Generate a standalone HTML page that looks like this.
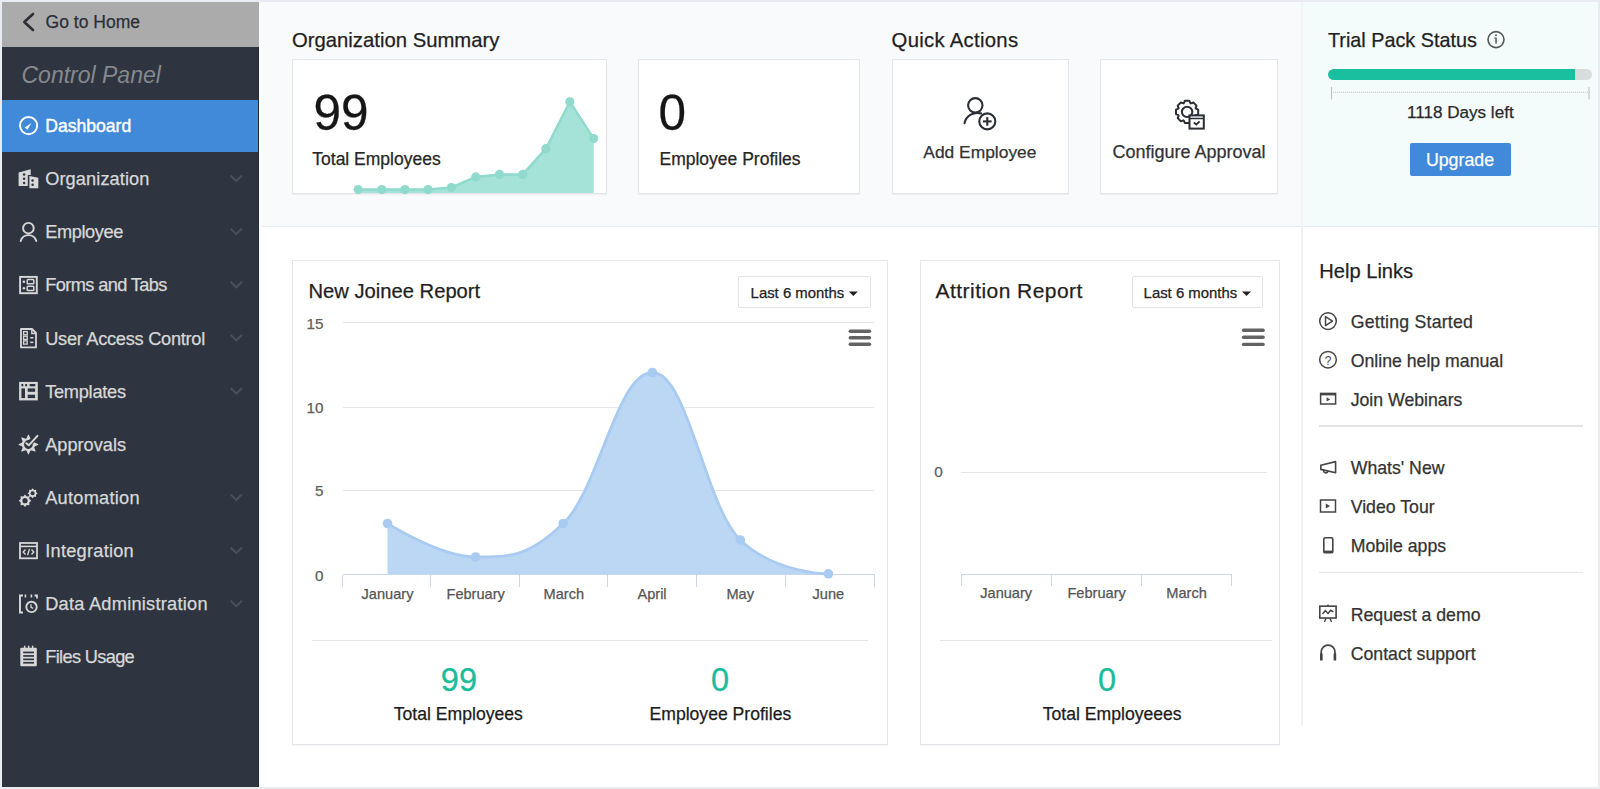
<!DOCTYPE html>
<html><head><meta charset="utf-8"><title>Dashboard</title><style>
*{margin:0;padding:0;box-sizing:border-box}
html,body{width:1600px;height:789px;overflow:hidden;background:#e8ecf0;font-family:"Liberation Sans",sans-serif}
.t{position:absolute;white-space:nowrap}
.r{position:absolute}
svg{position:absolute;left:0;top:0}
</style></head>
<body>
<div class="r" style="left:2.00px;top:2.00px;width:1596.00px;height:785.00px;background:#ffffff;"></div>
<div class="r" style="left:2.00px;top:2.00px;width:257.00px;height:44.50px;background:#ababab;"></div>
<div class="r" style="left:2.00px;top:46.50px;width:257.00px;height:740.50px;background:#2f3540;"></div>
<div class="r" style="left:2.00px;top:100.00px;width:257.00px;height:51.50px;background:#418ad9;"></div>
<div class="r" style="left:258.00px;top:46.50px;width:1.00px;height:740.50px;background:#262a31;"></div>
<div class="r" style="left:262.00px;top:2.00px;width:1039.50px;height:224.50px;background:#f9fafb;"></div>
<div class="r" style="left:259.00px;top:2.00px;width:3.00px;height:785.00px;background:#fbfcfc;"></div>
<div class="r" style="left:1301.50px;top:2.00px;width:296.50px;height:224.50px;background:#f3fbfb;"></div>
<div class="r" style="left:262.00px;top:225.80px;width:1336.00px;height:1.20px;background:#e9ecf0;"></div>
<div class="r" style="left:1300.50px;top:2.00px;width:2.00px;height:224.50px;background:#f1f3f5;"></div>
<div class="r" style="left:1300.50px;top:227.00px;width:2.00px;height:499.00px;background:#eff1f3;"></div>
<div class="t" style="top:14px;font-size:17.5px;line-height:17.5px;color:#2b2f36;-webkit-text-stroke:0.25px #2b2f36;left:45.60px;">Go to Home</div>
<div class="t" style="top:64px;font-size:23px;line-height:23px;color:#85898f;font-style:italic;left:21.50px;-webkit-text-stroke:0;">Control Panel</div>
<div class="t" style="top:118px;font-size:17.6px;line-height:17.6px;color:#ffffff;left:45.20px;-webkit-text-stroke:0.4px #fff;">Dashboard</div>
<div class="t" style="top:170px;font-size:18.2px;line-height:18.2px;color:#d8d8d8;letter-spacing:0.1px;-webkit-text-stroke:0.25px #d8d8d8;left:45.20px;">Organization</div>
<div class="t" style="top:223px;font-size:18.2px;line-height:18.2px;color:#d8d8d8;letter-spacing:-0.4px;-webkit-text-stroke:0.25px #d8d8d8;left:45.20px;">Employee</div>
<div class="t" style="top:276px;font-size:18.2px;line-height:18.2px;color:#d8d8d8;letter-spacing:-0.6px;-webkit-text-stroke:0.25px #d8d8d8;left:45.20px;">Forms and Tabs</div>
<div class="t" style="top:330px;font-size:18.2px;line-height:18.2px;color:#d8d8d8;letter-spacing:-0.26px;-webkit-text-stroke:0.25px #d8d8d8;left:45.20px;">User Access Control</div>
<div class="t" style="top:383px;font-size:18.2px;line-height:18.2px;color:#d8d8d8;letter-spacing:-0.26px;-webkit-text-stroke:0.25px #d8d8d8;left:45.20px;">Templates</div>
<div class="t" style="top:436px;font-size:18.2px;line-height:18.2px;color:#d8d8d8;-webkit-text-stroke:0.25px #d8d8d8;left:45.20px;">Approvals</div>
<div class="t" style="top:489px;font-size:18.2px;line-height:18.2px;color:#d8d8d8;letter-spacing:0.27px;-webkit-text-stroke:0.25px #d8d8d8;left:45.20px;">Automation</div>
<div class="t" style="top:542px;font-size:18.2px;line-height:18.2px;color:#d8d8d8;letter-spacing:0.26px;-webkit-text-stroke:0.25px #d8d8d8;left:45.20px;">Integration</div>
<div class="t" style="top:595px;font-size:18.2px;line-height:18.2px;color:#d8d8d8;letter-spacing:0.26px;-webkit-text-stroke:0.25px #d8d8d8;left:45.20px;">Data Administration</div>
<div class="t" style="top:648px;font-size:18.2px;line-height:18.2px;color:#d8d8d8;letter-spacing:-0.65px;-webkit-text-stroke:0.25px #d8d8d8;left:45.20px;">Files Usage</div>
<div class="t" style="top:30px;font-size:20.3px;line-height:20.3px;color:#1f1f1f;-webkit-text-stroke:0.25px #1f1f1f;left:292.00px;">Organization Summary</div>
<div class="t" style="top:30px;font-size:20.3px;line-height:20.3px;color:#1f1f1f;letter-spacing:0.3px;-webkit-text-stroke:0.25px #1f1f1f;left:891.60px;">Quick Actions</div>
<div class="t" style="top:31px;font-size:19.8px;line-height:19.8px;color:#1f1f1f;-webkit-text-stroke:0.25px #1f1f1f;left:1328.00px;">Trial Pack Status</div>
<div class="r" style="left:291.5px;top:58.5px;width:315.0px;height:135.5px;background:#fff;border:1px solid #e4e5e8;box-shadow:0 1px 1px rgba(0,0,0,0.04);"></div>
<div class="r" style="left:638px;top:58.5px;width:222px;height:135.5px;background:#fff;border:1px solid #e4e5e8;box-shadow:0 1px 1px rgba(0,0,0,0.04);"></div>
<div class="r" style="left:891.5px;top:58.5px;width:177.0px;height:135.5px;background:#fff;border:1px solid #e4e5e8;box-shadow:0 1px 1px rgba(0,0,0,0.04);"></div>
<div class="r" style="left:1099.5px;top:58.5px;width:178.5px;height:135.5px;background:#fff;border:1px solid #e4e5e8;box-shadow:0 1px 1px rgba(0,0,0,0.04);"></div>
<div class="t" style="top:88px;font-size:49.5px;line-height:49.5px;color:#161616;-webkit-text-stroke:0.25px #161616;left:313.50px;">99</div>
<div class="t" style="top:151px;font-size:17.5px;line-height:17.5px;color:#262626;left:312.30px;-webkit-text-stroke:0.25px #262626;">Total Employees</div>
<div class="t" style="top:88px;font-size:49.5px;line-height:49.5px;color:#161616;-webkit-text-stroke:0.25px #161616;left:658.50px;">0</div>
<div class="t" style="top:151px;font-size:17.5px;line-height:17.5px;color:#262626;left:659.50px;-webkit-text-stroke:0.25px #262626;">Employee Profiles</div>
<div class="t" style="top:144px;font-size:17.4px;line-height:17.4px;color:#333;-webkit-text-stroke:0.25px #333;left:679.90px;width:600px;text-align:center;">Add Employee</div>
<div class="t" style="top:143px;font-size:18px;line-height:18px;color:#333;-webkit-text-stroke:0.25px #333;left:889.00px;width:600px;text-align:center;">Configure Approval</div>
<div class="t" style="top:104px;font-size:17.1px;line-height:17.1px;color:#2a2a2a;-webkit-text-stroke:0.25px #2a2a2a;left:1160.30px;width:600px;text-align:center;">1118 Days left</div>
<div class="r" style="left:1409.5px;top:142.5px;width:101px;height:33.5px;background:#4189da;border-radius:2px"></div>
<div class="t" style="top:152px;font-size:17.8px;line-height:17.8px;color:#ffffff;-webkit-text-stroke:0.25px #ffffff;left:1160.00px;width:600px;text-align:center;">Upgrade</div>
<div class="r" style="left:1328px;top:68.5px;width:264px;height:11.5px;background:#d9dcdc;border-radius:6px;overflow:hidden"><div style="width:246.5px;height:100%;background:#19bf9f;border-radius:6px 0 0 6px"></div></div>
<div class="r" style="left:291.5px;top:260px;width:596.0px;height:484.5px;background:#fff;border:1px solid #e3e6ea;box-shadow:0 1px 1px rgba(0,0,0,0.04);"></div>
<div class="r" style="left:919.5px;top:260px;width:360.5px;height:484.5px;background:#fff;border:1px solid #e3e6ea;box-shadow:0 1px 1px rgba(0,0,0,0.04);"></div>
<div class="t" style="top:281px;font-size:20.2px;line-height:20.2px;color:#1f1f1f;-webkit-text-stroke:0.25px #1f1f1f;left:308.50px;">New Joinee Report</div>
<div class="t" style="top:280px;font-size:21px;line-height:21px;color:#1f1f1f;letter-spacing:0.45px;-webkit-text-stroke:0.25px #1f1f1f;left:935.60px;">Attrition Report</div>
<div class="r" style="left:738px;top:276px;width:133px;height:32px;border:1px solid #e3e3e3;background:#fff;border-radius:2px"></div>
<div class="r" style="left:1131.5px;top:276px;width:131.5px;height:32px;border:1px solid #e3e3e3;background:#fff;border-radius:2px"></div>
<div class="t" style="top:286px;font-size:14.9px;line-height:14.9px;color:#222;-webkit-text-stroke:0.25px #222;left:750.60px;">Last 6 months</div>
<div class="t" style="top:286px;font-size:14.9px;line-height:14.9px;color:#222;-webkit-text-stroke:0.25px #222;left:1143.60px;">Last 6 months</div>
<div class="t" style="top:261px;font-size:20.1px;line-height:20.1px;color:#1f1f1f;-webkit-text-stroke:0.25px #1f1f1f;left:1319.30px;">Help Links</div>
<div class="t" style="top:314px;font-size:17.7px;line-height:17.7px;color:#333;letter-spacing:0.23px;-webkit-text-stroke:0.25px #333;left:1350.70px;">Getting Started</div>
<div class="t" style="top:353px;font-size:17.7px;line-height:17.7px;color:#333;-webkit-text-stroke:0.25px #333;left:1350.70px;">Online help manual</div>
<div class="t" style="top:392px;font-size:17.7px;line-height:17.7px;color:#333;-webkit-text-stroke:0.25px #333;left:1350.70px;">Join Webinars</div>
<div class="t" style="top:460px;font-size:17.7px;line-height:17.7px;color:#333;-webkit-text-stroke:0.25px #333;left:1350.70px;">Whats' New</div>
<div class="t" style="top:499px;font-size:17.7px;line-height:17.7px;color:#333;-webkit-text-stroke:0.25px #333;left:1350.70px;">Video Tour</div>
<div class="t" style="top:538px;font-size:17.7px;line-height:17.7px;color:#333;-webkit-text-stroke:0.25px #333;left:1350.70px;">Mobile apps</div>
<div class="t" style="top:607px;font-size:17.7px;line-height:17.7px;color:#333;-webkit-text-stroke:0.25px #333;left:1350.70px;">Request a demo</div>
<div class="t" style="top:646px;font-size:17.7px;line-height:17.7px;color:#333;-webkit-text-stroke:0.25px #333;left:1350.70px;">Contact support</div>
<div class="r" style="left:1319.00px;top:425.00px;width:264.00px;height:1.50px;background:#e4e4e4;"></div>
<div class="r" style="left:1319.00px;top:571.50px;width:264.00px;height:1.50px;background:#e4e4e4;"></div>
<div class="r" style="left:343.00px;top:321.70px;width:531.00px;height:1.00px;background:#e6e6e6;"></div>
<div class="r" style="left:343.00px;top:406.90px;width:531.00px;height:1.00px;background:#e6e6e6;"></div>
<div class="r" style="left:343.00px;top:489.90px;width:531.00px;height:1.00px;background:#e6e6e6;"></div>
<div class="r" style="left:342.50px;top:574.10px;width:532.50px;height:1.00px;background:#ccd6eb;"></div>
<div class="r" style="left:342.00px;top:574.50px;width:1.00px;height:12.00px;background:#ccd6eb;"></div>
<div class="r" style="left:430.00px;top:574.50px;width:1.00px;height:12.00px;background:#ccd6eb;"></div>
<div class="r" style="left:519.00px;top:574.50px;width:1.00px;height:12.00px;background:#ccd6eb;"></div>
<div class="r" style="left:607.00px;top:574.50px;width:1.00px;height:12.00px;background:#ccd6eb;"></div>
<div class="r" style="left:695.50px;top:574.50px;width:1.00px;height:12.00px;background:#ccd6eb;"></div>
<div class="r" style="left:785.00px;top:574.50px;width:1.00px;height:12.00px;background:#ccd6eb;"></div>
<div class="r" style="left:874.00px;top:574.50px;width:1.00px;height:12.00px;background:#ccd6eb;"></div>
<div class="t" style="top:316px;font-size:15.3px;line-height:15.3px;color:#606060;-webkit-text-stroke:0.25px #606060;left:23.60px;width:300px;text-align:right;">15</div>
<div class="t" style="top:400px;font-size:15.3px;line-height:15.3px;color:#606060;-webkit-text-stroke:0.25px #606060;left:23.60px;width:300px;text-align:right;">10</div>
<div class="t" style="top:483px;font-size:15.3px;line-height:15.3px;color:#606060;-webkit-text-stroke:0.25px #606060;left:23.60px;width:300px;text-align:right;">5</div>
<div class="t" style="top:568px;font-size:15.3px;line-height:15.3px;color:#606060;-webkit-text-stroke:0.25px #606060;left:23.60px;width:300px;text-align:right;">0</div>
<div class="t" style="top:587px;font-size:14.6px;line-height:14.6px;color:#555;-webkit-text-stroke:0.25px #555;left:87.50px;width:600px;text-align:center;">January</div>
<div class="t" style="top:587px;font-size:14.6px;line-height:14.6px;color:#555;-webkit-text-stroke:0.25px #555;left:175.68px;width:600px;text-align:center;">February</div>
<div class="t" style="top:587px;font-size:14.6px;line-height:14.6px;color:#555;-webkit-text-stroke:0.25px #555;left:263.86px;width:600px;text-align:center;">March</div>
<div class="t" style="top:587px;font-size:14.6px;line-height:14.6px;color:#555;-webkit-text-stroke:0.25px #555;left:352.04px;width:600px;text-align:center;">April</div>
<div class="t" style="top:587px;font-size:14.6px;line-height:14.6px;color:#555;-webkit-text-stroke:0.25px #555;left:440.22px;width:600px;text-align:center;">May</div>
<div class="t" style="top:587px;font-size:14.6px;line-height:14.6px;color:#555;-webkit-text-stroke:0.25px #555;left:528.40px;width:600px;text-align:center;">June</div>
<div class="r" style="left:312.00px;top:640.00px;width:555.60px;height:1.20px;background:#e6e6e6;"></div>
<div class="t" style="top:664px;font-size:32.5px;line-height:32.5px;color:#1abc9c;-webkit-text-stroke:0.25px #1abc9c;left:158.90px;width:600px;text-align:center;">99</div>
<div class="t" style="top:664px;font-size:32.5px;line-height:32.5px;color:#1abc9c;-webkit-text-stroke:0.25px #1abc9c;left:420.00px;width:600px;text-align:center;">0</div>
<div class="t" style="top:706px;font-size:17.6px;line-height:17.6px;color:#1c1c1c;-webkit-text-stroke:0.25px #1c1c1c;left:158.30px;width:600px;text-align:center;">Total Employees</div>
<div class="t" style="top:706px;font-size:17.6px;line-height:17.6px;color:#1c1c1c;-webkit-text-stroke:0.25px #1c1c1c;left:420.40px;width:600px;text-align:center;">Employee Profiles</div>
<div class="r" style="left:961.00px;top:471.80px;width:306.40px;height:1.00px;background:#e6e6e6;"></div>
<div class="t" style="top:464px;font-size:15.3px;line-height:15.3px;color:#606060;-webkit-text-stroke:0.25px #606060;left:642.80px;width:300px;text-align:right;">0</div>
<div class="r" style="left:961.00px;top:574.00px;width:271.00px;height:1.00px;background:#ccd6eb;"></div>
<div class="r" style="left:960.75px;top:574.50px;width:1.00px;height:11.80px;background:#ccd6eb;"></div>
<div class="r" style="left:1051.15px;top:574.50px;width:1.00px;height:11.80px;background:#ccd6eb;"></div>
<div class="r" style="left:1140.70px;top:574.50px;width:1.00px;height:11.80px;background:#ccd6eb;"></div>
<div class="r" style="left:1231.00px;top:574.50px;width:1.00px;height:11.80px;background:#ccd6eb;"></div>
<div class="t" style="top:586px;font-size:14.6px;line-height:14.6px;color:#555;-webkit-text-stroke:0.25px #555;left:706.20px;width:600px;text-align:center;">January</div>
<div class="t" style="top:586px;font-size:14.6px;line-height:14.6px;color:#555;-webkit-text-stroke:0.25px #555;left:796.60px;width:600px;text-align:center;">February</div>
<div class="t" style="top:586px;font-size:14.6px;line-height:14.6px;color:#555;-webkit-text-stroke:0.25px #555;left:886.60px;width:600px;text-align:center;">March</div>
<div class="r" style="left:939.50px;top:640.00px;width:332.20px;height:1.20px;background:#e6e6e6;"></div>
<div class="t" style="top:664px;font-size:32.5px;line-height:32.5px;color:#1abc9c;-webkit-text-stroke:0.25px #1abc9c;left:807.00px;width:600px;text-align:center;">0</div>
<div class="t" style="top:706px;font-size:17.6px;line-height:17.6px;color:#1c1c1c;-webkit-text-stroke:0.25px #1c1c1c;left:812.20px;width:600px;text-align:center;">Total Employeees</div>
<svg width="1600" height="789" viewBox="0 0 1600 789"><path d="M 387.50 523.50 C 387.50 523.50 440.36 557.00 475.60 557.00 C 510.64 557.00 528.16 557.00 563.20 523.50 C 598.92 490.00 616.78 372.50 652.50 372.50 C 687.62 372.50 705.18 506.20 740.30 540.00 C 775.54 573.80 828.40 573.80 828.40 573.80 L 828.40 574.2 L 387.50 574.2 Z" fill="#bcd7f4"/><path d="M 387.50 523.50 C 387.50 523.50 440.36 557.00 475.60 557.00 C 510.64 557.00 528.16 557.00 563.20 523.50 C 598.92 490.00 616.78 372.50 652.50 372.50 C 687.62 372.50 705.18 506.20 740.30 540.00 C 775.54 573.80 828.40 573.80 828.40 573.80" fill="none" stroke="#a9cbf1" stroke-width="2.8"/><circle cx="387.50" cy="523.50" r="4.8" fill="#a9cbf1"/><circle cx="475.60" cy="557.00" r="4.8" fill="#a9cbf1"/><circle cx="563.20" cy="523.50" r="4.8" fill="#a9cbf1"/><circle cx="652.50" cy="372.50" r="4.8" fill="#a9cbf1"/><circle cx="740.30" cy="540.00" r="4.8" fill="#a9cbf1"/><circle cx="828.40" cy="573.80" r="4.8" fill="#a9cbf1"/><polygon points="358.2,189.6 381.8,189.6 405,189.6 428.1,189.6 451.4,187.5 475.8,176.9 499.5,174.4 522.8,174.4 545.9,148.7 569.8,101.8 593.7,138.6 593.7,193 358.2,193" fill="#a5e3d9"/><polyline points="358.2,189.6 381.8,189.6 405,189.6 428.1,189.6 451.4,187.5 475.8,176.9 499.5,174.4 522.8,174.4 545.9,148.7 569.8,101.8 593.7,138.6" fill="none" stroke="#90dacd" stroke-width="2.5" stroke-linejoin="round"/><circle cx="358.2" cy="189.6" r="4.6" fill="#90dacd"/><circle cx="381.8" cy="189.6" r="4.6" fill="#90dacd"/><circle cx="405" cy="189.6" r="4.6" fill="#90dacd"/><circle cx="428.1" cy="189.6" r="4.6" fill="#90dacd"/><circle cx="451.4" cy="187.5" r="4.6" fill="#90dacd"/><circle cx="475.8" cy="176.9" r="4.6" fill="#90dacd"/><circle cx="499.5" cy="174.4" r="4.6" fill="#90dacd"/><circle cx="522.8" cy="174.4" r="4.6" fill="#90dacd"/><circle cx="545.9" cy="148.7" r="4.6" fill="#90dacd"/><circle cx="569.8" cy="101.8" r="4.6" fill="#90dacd"/><circle cx="593.7" cy="138.6" r="4.6" fill="#90dacd"/></svg>
<svg width="1600" height="789" viewBox="0 0 1600 789"><polyline points="33,14 24.3,22 33,30" fill="none" stroke="#2b2f36" stroke-width="2.6" stroke-linecap="round" stroke-linejoin="round"/><circle cx="28.6" cy="125.6" r="8.6" fill="none" stroke="#fff" stroke-width="1.9"/><polygon points="24.8,127.6 27.4,129.8 31.4,122.9" fill="#fff"/><polygon points="18.6,172.4 30.7,169.2 30.7,174.9 27.8,174.9 27.8,186.1 18.6,186.1" fill="#d8d8d8"/><polygon points="29.4,176.1 38.3,177.7 38.3,188.2 29.4,188.2" fill="#d8d8d8"/><circle cx="24.1" cy="174.6" r="1.25" fill="#2f3540"/><circle cx="24.1" cy="178.7" r="1.25" fill="#2f3540"/><circle cx="24.1" cy="182.9" r="1.25" fill="#2f3540"/><circle cx="32.6" cy="180.6" r="1.25" fill="#2f3540"/><circle cx="32.6" cy="184.8" r="1.25" fill="#2f3540"/><circle cx="28.4" cy="228.2" r="5.3" fill="none" stroke="#d8d8d8" stroke-width="1.9"/><path d="M 20.7 241 A 8.1 8.1 0 0 1 36.3 241" fill="none" stroke="#d8d8d8" stroke-width="1.9" stroke-linecap="round"/><rect x="20.1" y="276.9" width="16.7" height="16.3" fill="none" stroke="#d8d8d8" stroke-width="1.9"/><circle cx="23.9" cy="281.7" r="1.3" fill="#d8d8d8"/><circle cx="23.9" cy="288.3" r="1.3" fill="#d8d8d8"/><rect x="27.2" y="279.6" width="6.6" height="4.2" rx="0.8" fill="none" stroke="#d8d8d8" stroke-width="1.5"/><rect x="27.2" y="286.3" width="6.6" height="4.2" rx="0.8" fill="none" stroke="#d8d8d8" stroke-width="1.5"/><path d="M 21 329 H 32 L 36 333 V 347.4 H 21 Z" fill="none" stroke="#d8d8d8" stroke-width="1.8" stroke-linejoin="round"/><path d="M 31.8 329 V 333.5 H 36" fill="none" stroke="#d8d8d8" stroke-width="1.4"/><rect x="23.6" y="331.6" width="3.6" height="3.2" fill="none" stroke="#d8d8d8" stroke-width="1.3"/><rect x="23.6" y="336.2" width="3.6" height="3.2" fill="none" stroke="#d8d8d8" stroke-width="1.3"/><rect x="23.6" y="340.9" width="3.6" height="3.2" fill="none" stroke="#d8d8d8" stroke-width="1.3"/><rect x="30.2" y="337" width="3.2" height="1.5" fill="#d8d8d8"/><rect x="30.2" y="341.6" width="3.2" height="1.5" fill="#d8d8d8"/><rect x="19.1" y="381.9" width="18.7" height="18.5" fill="#d8d8d8"/><rect x="21.4" y="384" width="1.9" height="2.3" fill="#2f3540"/><rect x="25.2" y="384" width="1.9" height="2.3" fill="#2f3540"/><rect x="29.6" y="384" width="5.7" height="2.3" fill="#2f3540"/><rect x="21.4" y="388.4" width="3.6" height="9.7" fill="#2f3540"/><rect x="27.7" y="388.4" width="7.4" height="3.4" fill="#2f3540"/><rect x="27.7" y="394.7" width="7.4" height="3.4" fill="#2f3540"/><path d="M 33.83 443.36 A 5.5 5.5 0 1 1 29.22 439.05" fill="none" stroke="#d8d8d8" stroke-width="2.2"/><polygon points="27.00,438.68 28.45,435.20 29.90,438.68" fill="#d8d8d8" stroke="#d8d8d8" stroke-width="1.1" stroke-linejoin="round"/><polygon points="23.31,441.41 21.87,437.92 25.36,439.36" fill="#d8d8d8" stroke="#d8d8d8" stroke-width="1.1" stroke-linejoin="round"/><polygon points="22.63,445.95 19.15,444.50 22.63,443.05" fill="#d8d8d8" stroke="#d8d8d8" stroke-width="1.1" stroke-linejoin="round"/><polygon points="25.36,449.64 21.87,451.08 23.31,447.59" fill="#d8d8d8" stroke="#d8d8d8" stroke-width="1.1" stroke-linejoin="round"/><polygon points="29.90,450.32 28.45,453.80 27.00,450.32" fill="#d8d8d8" stroke="#d8d8d8" stroke-width="1.1" stroke-linejoin="round"/><polygon points="33.59,447.59 35.03,451.08 31.54,449.64" fill="#d8d8d8" stroke="#d8d8d8" stroke-width="1.1" stroke-linejoin="round"/><polygon points="34.27,443.05 37.75,444.50 34.27,445.95" fill="#d8d8d8" stroke="#d8d8d8" stroke-width="1.1" stroke-linejoin="round"/><polyline points="26.4,443.2 28.8,445.3 37.4,435.8" fill="none" stroke="#d8d8d8" stroke-width="2" stroke-linecap="round" stroke-linejoin="round"/><polygon points="31.30,500.70 29.25,502.46 29.45,505.15 26.76,504.95 25.00,507.00 23.24,504.95 20.55,505.15 20.75,502.46 18.70,500.70 20.75,498.94 20.55,496.25 23.24,496.45 25.00,494.40 26.76,496.45 29.45,496.25 29.25,498.94" fill="#d8d8d8"/><circle cx="25" cy="500.7" r="2.6" fill="#2f3540"/><polygon points="37.60,493.30 36.02,494.72 36.14,496.84 34.02,496.72 32.60,498.30 31.18,496.72 29.06,496.84 29.18,494.72 27.60,493.30 29.18,491.88 29.06,489.76 31.18,489.88 32.60,488.30 34.02,489.88 36.14,489.76 36.02,491.88" fill="#d8d8d8"/><circle cx="32.6" cy="493.3" r="2.0" fill="#2f3540"/><rect x="20" y="543" width="17" height="15.3" fill="none" stroke="#d8d8d8" stroke-width="1.8"/><rect x="20" y="545.6" width="17" height="1.6" fill="#d8d8d8"/><polyline points="25.5,549.5 23.2,552 25.5,554.5" fill="none" stroke="#d8d8d8" stroke-width="1.4"/><polyline points="31.5,549.5 33.8,552 31.5,554.5" fill="none" stroke="#d8d8d8" stroke-width="1.4"/><line x1="29.4" y1="549" x2="27.6" y2="555.3" stroke="#d8d8d8" stroke-width="1.3"/><polyline points="23,595.5 20,595.5 20,612.5 23,612.5" fill="none" stroke="#d8d8d8" stroke-width="1.9"/><rect x="24.6" y="594.5" width="1.6" height="3" fill="#d8d8d8"/><rect x="30.6" y="594.5" width="1.6" height="3" fill="#d8d8d8"/><polyline points="34.5,595.5 37,595.5 37,598.5" fill="none" stroke="#d8d8d8" stroke-width="1.8"/><circle cx="31.5" cy="606.9" r="5.2" fill="none" stroke="#d8d8d8" stroke-width="1.9"/><polyline points="31,604.2 31,607.3 33.2,608.4" fill="none" stroke="#d8d8d8" stroke-width="1.3"/><rect x="20.3" y="647.8" width="16.5" height="18.5" rx="1" fill="#d8d8d8"/><rect x="23.2" y="651.6" width="10.8" height="1.7" fill="#2f3540"/><rect x="23.2" y="655.1" width="10.8" height="1.7" fill="#2f3540"/><rect x="23.2" y="658.5" width="10.8" height="1.7" fill="#2f3540"/><rect x="23.2" y="661.9" width="10.8" height="1.7" fill="#2f3540"/><rect x="23.9" y="645.7" width="1.5" height="3" fill="#d8d8d8"/><rect x="27.9" y="645.7" width="1.5" height="3" fill="#d8d8d8"/><rect x="31.9" y="645.7" width="1.5" height="3" fill="#d8d8d8"/><polyline points="230.6,175.45 236.2,180.95 242,175.45" fill="none" stroke="#4a505a" stroke-width="2"/><polyline points="230.6,228.60 236.2,234.10 242,228.60" fill="none" stroke="#4a505a" stroke-width="2"/><polyline points="230.6,281.75 236.2,287.25 242,281.75" fill="none" stroke="#4a505a" stroke-width="2"/><polyline points="230.6,334.90 236.2,340.40 242,334.90" fill="none" stroke="#4a505a" stroke-width="2"/><polyline points="230.6,388.05 236.2,393.55 242,388.05" fill="none" stroke="#4a505a" stroke-width="2"/><polyline points="230.6,494.35 236.2,499.85 242,494.35" fill="none" stroke="#4a505a" stroke-width="2"/><polyline points="230.6,547.50 236.2,553.00 242,547.50" fill="none" stroke="#4a505a" stroke-width="2"/><polyline points="230.6,600.65 236.2,606.15 242,600.65" fill="none" stroke="#4a505a" stroke-width="2"/><circle cx="975.3" cy="105.3" r="7.2" fill="none" stroke="#2a2e35" stroke-width="2.1"/><path d="M 964.5 123.2 A 13 13 0 0 1 981.2 113.5" fill="none" stroke="#2a2e35" stroke-width="2.1" stroke-linecap="round"/><circle cx="987.3" cy="121.4" r="8" fill="#fff" stroke="#2a2e35" stroke-width="2.1"/><line x1="983" y1="121.4" x2="991.6" y2="121.4" stroke="#2a2e35" stroke-width="2.1"/><line x1="987.3" y1="117.1" x2="987.3" y2="125.7" stroke="#2a2e35" stroke-width="2.1"/><polygon points="1195.80,108.62 1198.17,109.66 1198.17,114.14 1195.80,115.18 1195.57,115.74 1196.52,118.14 1193.34,121.32 1190.94,120.37 1190.38,120.60 1189.34,122.97 1184.86,122.97 1183.82,120.60 1183.26,120.37 1180.86,121.32 1177.68,118.14 1178.63,115.74 1178.40,115.18 1176.03,114.14 1176.03,109.66 1178.40,108.62 1178.63,108.06 1177.68,105.66 1180.86,102.48 1183.26,103.43 1183.82,103.20 1184.86,100.83 1189.34,100.83 1190.38,103.20 1190.94,103.43 1193.34,102.48 1196.52,105.66 1195.57,108.06" fill="none" stroke="#2a2e35" stroke-width="2" stroke-linejoin="round"/><circle cx="1187.1" cy="111.9" r="5.2" fill="none" stroke="#2a2e35" stroke-width="2"/><rect x="1189.5" y="115.4" width="14.3" height="13.2" fill="#fff" stroke="#2a2e35" stroke-width="2"/><line x1="1189.5" y1="118.5" x2="1203.8" y2="118.5" stroke="#2a2e35" stroke-width="1.5"/><polyline points="1193.8,122.6 1196.3,124.6 1199.6,121.3" fill="none" stroke="#2a2e35" stroke-width="1.9"/><circle cx="1496" cy="39.6" r="8" fill="none" stroke="#555" stroke-width="1.6"/><rect x="1495.3" y="37.6" width="1.5" height="6" fill="#555"/><rect x="1494.3" y="37.6" width="1.5" height="1.1" fill="#555"/><circle cx="1496" cy="35.3" r="0.95" fill="#555"/><line x1="1331" y1="92.3" x2="1589.7" y2="92.3" stroke="#c4c4c4" stroke-width="1" stroke-dasharray="1 1"/><line x1="1331.5" y1="87" x2="1331.5" y2="99.5" stroke="#c0c0c0" stroke-width="1.1"/><line x1="1589" y1="87" x2="1589" y2="99.5" stroke="#c0c0c0" stroke-width="1.1"/><line x1="850.3" y1="331.3" x2="869.5" y2="331.3" stroke="#636363" stroke-width="3.4" stroke-linecap="round"/><line x1="850.3" y1="337.7" x2="869.5" y2="337.7" stroke="#636363" stroke-width="3.4" stroke-linecap="round"/><line x1="850.3" y1="344.2" x2="869.5" y2="344.2" stroke="#636363" stroke-width="3.4" stroke-linecap="round"/><line x1="1243.5" y1="330.2" x2="1263.1000000000001" y2="330.2" stroke="#636363" stroke-width="3.4" stroke-linecap="round"/><line x1="1243.5" y1="337.3" x2="1263.1000000000001" y2="337.3" stroke="#636363" stroke-width="3.4" stroke-linecap="round"/><line x1="1243.5" y1="344.4" x2="1263.1000000000001" y2="344.4" stroke="#636363" stroke-width="3.4" stroke-linecap="round"/><polygon points="848.8,291.5 857.8,291.5 853.3,296" fill="#222"/><polygon points="1242,291.5 1251,291.5 1246.5,296" fill="#222"/><circle cx="1328" cy="321.1" r="8.3" fill="none" stroke="#444" stroke-width="1.5"/><polygon points="1325.5,316.6 1325.5,325.6 1332.5,321.1" fill="none" stroke="#444" stroke-width="1.5" stroke-linejoin="round"/><circle cx="1328" cy="359.7" r="8.3" fill="none" stroke="#444" stroke-width="1.5"/><text x="1328" y="364.6" font-family="Liberation Sans" font-size="12" text-anchor="middle" fill="#444">?</text><rect x="1320.6" y="393.4" width="15" height="10.6" fill="none" stroke="#444" stroke-width="1.5"/><rect x="1320.6" y="393.4" width="15" height="2" fill="#444"/><polygon points="1326.6,397.2 1326.6,401.6 1330.2,399.4" fill="#444"/><path d="M 1320.8 465.2 L 1335.6 461.6 V 472.8 L 1320.8 469.4 Z" fill="none" stroke="#444" stroke-width="1.6" stroke-linejoin="round"/><path d="M 1323.5 469.8 A 2.4 2.4 0 0 0 1328.2 471" fill="none" stroke="#444" stroke-width="1.5"/><rect x="1320.5" y="500" width="15" height="12" fill="none" stroke="#444" stroke-width="1.5"/><polygon points="1325.8,503.6 1325.8,508.6 1330,506.1" fill="#444"/><rect x="1323.8" y="537.8" width="9" height="15" rx="1.4" fill="none" stroke="#444" stroke-width="1.6"/><rect x="1323.8" y="550.6" width="9" height="2.4" fill="#444"/><rect x="1319.8" y="606.2" width="16.3" height="11.8" fill="none" stroke="#444" stroke-width="1.6"/><polyline points="1322.5,614 1325.3,610.6 1328,613.4 1330.6,610.3 1333.4,611.8" fill="none" stroke="#444" stroke-width="1.5"/><line x1="1326" y1="618" x2="1324.5" y2="622" stroke="#444" stroke-width="1.4"/><line x1="1330" y1="618" x2="1331.5" y2="622" stroke="#444" stroke-width="1.4"/><line x1="1328" y1="604.5" x2="1328" y2="606" stroke="#444" stroke-width="1.4"/><path d="M 1321.2 660 V 652 A 6.9 6.9 0 0 1 1335 652 V 660" fill="none" stroke="#444" stroke-width="1.7"/><rect x="1320" y="653.5" width="2.6" height="7" fill="#444"/><rect x="1333.6" y="653.5" width="2.6" height="7" fill="#444"/></svg>
</body></html>
